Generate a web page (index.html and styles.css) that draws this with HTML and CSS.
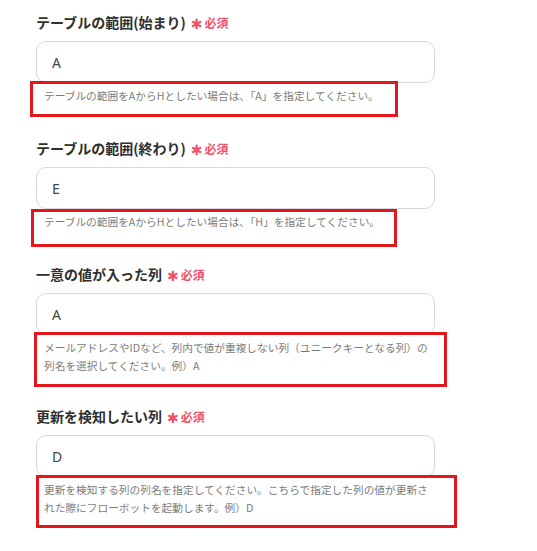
FILE: index.html
```html
<!DOCTYPE html>
<html lang="ja">
<head>
    <meta charset="UTF-8">
    <meta name="viewport" content="width=device-width, initial-scale=1.0">
    <title>フィールド設定</title>
    <link rel="stylesheet" href="styles.css">
</head>
<body>
    <div class="form">
        <div class="field">
            <label class="label">テーブルの範囲(始まり)<span class="req"><span class="star">✱</span>必須</span></label>
            <div class="input">A</div>
            <div class="hint">
                テーブルの範囲をAからHとしたい場合は、「A」を指定してください。
                <span class="mark mark-1"></span>
            </div>
        </div>

        <div class="field">
            <label class="label">テーブルの範囲(終わり)<span class="req"><span class="star">✱</span>必須</span></label>
            <div class="input">E</div>
            <div class="hint">
                テーブルの範囲をAからHとしたい場合は、「H」を指定してください。
                <span class="mark mark-2"></span>
            </div>
        </div>

        <div class="field field-tall">
            <label class="label">一意の値が入った列<span class="req"><span class="star">✱</span>必須</span></label>
            <div class="input">A</div>
            <div class="hint">
                メールアドレスやIDなど、列内で値が重複しない列（ユニークキーとなる列）の<br>列名を選択してください。例）A
                <span class="mark mark-3"></span>
            </div>
        </div>

        <div class="field">
            <label class="label">更新を検知したい列<span class="req"><span class="star">✱</span>必須</span></label>
            <div class="input">D</div>
            <div class="hint">
                更新を検知する列の列名を指定してください。こちらで指定した列の値が更新さ<br>れた際にフローボットを起動します。例）D
                <span class="mark mark-4"></span>
            </div>
        </div>
    </div>
</body>
</html>
```

FILE: styles.css
```css
body {
    margin: 0;
    background: #fff;
    font-family: 'Noto Sans CJK JP', 'Noto Sans', sans-serif;
    color: #333;
}
.form {
    padding: 12px 0 0 36px;
    width: 399px;
}
.field {
    margin-bottom: 33px;
}
.field-tall {
    margin-bottom: 31px;
}
.label {
    display: flex;
    align-items: center;
    height: 20px;
    font-size: 14px;
    font-weight: 700;
    color: #2f2f2f;
}
.req {
    display: inline-flex;
    align-items: center;
    margin-left: 5px;
    font-size: 12px;
    font-weight: 700;
    color: #f0506a;
}
.star {
    font-family: 'DejaVu Sans', sans-serif;
    font-size: 14px;
    line-height: 1;
    margin-right: 2px;
    position: relative;
    top: 2px;
}
.input {
    margin-top: 9px;
    height: 42px;
    box-sizing: border-box;
    border: 1px solid #d6d9de;
    border-radius: 10px;
    padding: 0 15px;
    display: flex;
    align-items: center;
    font-family: 'Noto Sans', sans-serif;
    font-size: 14px;
    color: #444;
}
.hint {
    position: relative;
    margin-top: 4px;
    padding-left: 8px;
    font-size: 10.7px;
    line-height: 18px;
    color: #7c7c7c;
    white-space: nowrap;
}
.mark {
    position: absolute;
    box-sizing: border-box;
    border: 3px solid #e2161b;
}
.mark-1 {
    top: -6px;
    left: -6px;
    width: 368px;
    height: 36px;
}
.mark-2 {
    top: -4px;
    left: -5px;
    width: 366px;
    height: 38px;
}
.mark-3 {
    top: -7px;
    left: -2px;
    width: 413px;
    height: 55px;
}
.mark-4 {
    top: -6px;
    left: 0;
    width: 421px;
    height: 53px;
}
```
